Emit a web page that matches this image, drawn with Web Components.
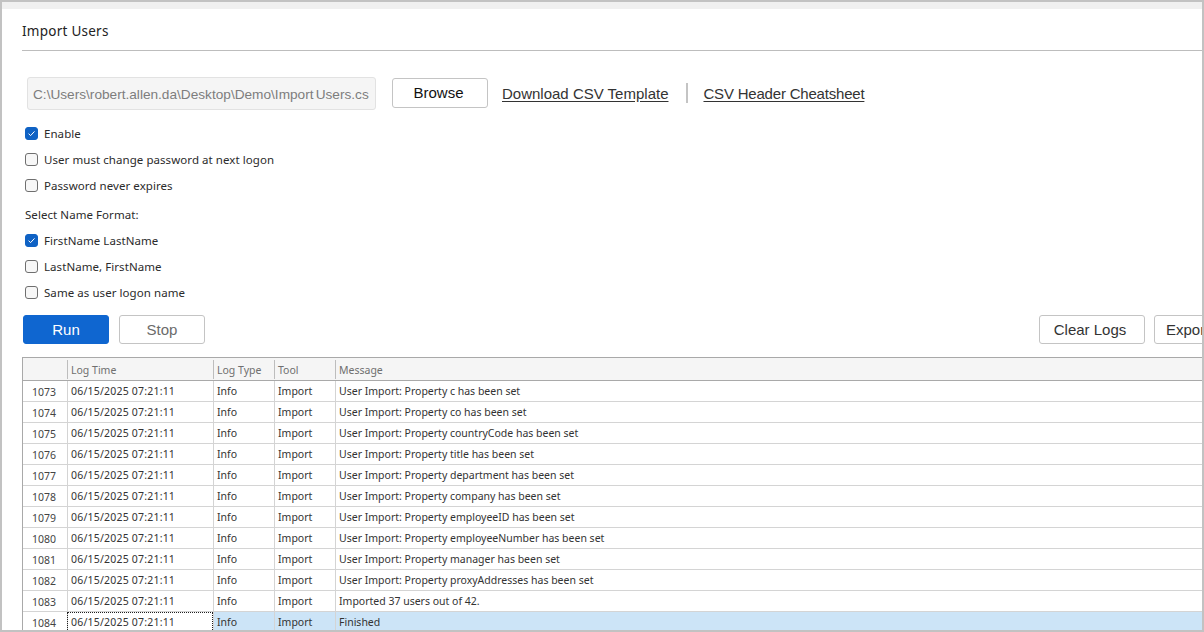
<!DOCTYPE html>
<html><head><meta charset="utf-8"><title>Import Users</title>
<style>
html,body{margin:0;height:100%;background:#fff;overflow:hidden}
body{font-family:"Noto Sans",sans-serif}
</style></head>
<body>
<import-page></import-page>
<script>
const LABEL='"Noto Sans","DejaVu Sans",sans-serif';
const UI='"Liberation Sans",Arial,sans-serif';
class XCheck extends HTMLElement{
  connectedCallback(){
    const on=this.hasAttribute('checked');
    const s=this.attachShadow({mode:'open'});
    s.innerHTML=`<style>
    :host{display:flex;align-items:center;height:26px;gap:6px;font:11.5px ${LABEL};letter-spacing:.06px;color:#2b2b2b}
    .b{width:13px;height:13px;box-sizing:border-box;border-radius:3px;display:flex;align-items:center;justify-content:center;flex:none;
       border:1px solid ${on?'#0f62c4':'#6f6f6f'};background:${on?'#0f62c4':'#f7f7f7'}}
    svg{display:${on?'block':'none'}}
    </style><span class="b"><svg width="9" height="9" viewBox="0 0 9 9"><path d="M1.6 4.7 3.6 6.6 7.5 2.4" fill="none" stroke="#fff" stroke-width="1"/></svg></span><span><slot></slot></span>`;
  }
}
customElements.define('x-check',XCheck);
class XBtn extends HTMLElement{
  connectedCallback(){
    const s=this.attachShadow({mode:'open'});
    s.innerHTML=`<style>
    :host{display:inline-flex;flex:none;align-items:center;justify-content:center;box-sizing:border-box;height:29px;width:86px;
      font:15px ${UI};color:#333;background:#fff;border:1px solid #c4c4c4;border-radius:3px}
    :host([primary]){background:#0f66d0;border-color:#0f66d0;color:#fff}
    :host([muted]){color:#6b6b6b}
    </style><slot></slot>`;
  }
}
customElements.define('x-btn',XBtn);
class XFileBar extends HTMLElement{
  connectedCallback(){
    const s=this.attachShadow({mode:'open'});
    s.innerHTML=`<style>
    :host{display:flex;align-items:center;font:15px ${UI};padding-left:5px;height:34px}
    .input{width:349px;height:33px;box-sizing:border-box;background:#f5f5f5;border:1px solid #e2e2e2;border-radius:3px;color:#7d7d7d;
      padding:0 5px;line-height:33px;white-space:nowrap;overflow:hidden;flex:none;font-size:13.65px;word-spacing:-1.6px}
    x-btn{margin-left:16px;width:96px;height:30px;color:#111;padding-right:3px;padding-bottom:2px}
    a{color:#333;text-decoration:underline;text-underline-offset:2px;margin-left:14px;white-space:nowrap}
    i{display:block;width:2px;height:20px;background:#c4c4c4;margin:0 15px 0 18px;flex:none}
    a.b{margin-left:0;letter-spacing:-.2px}
    </style><div class="input">C:\\Users\\robert.allen.da\\Desktop\\Demo\\Import Users.cs</div><x-btn>Browse</x-btn><a>Download CSV Template</a><i></i><a class="b">CSV Header Cheatsheet</a>`;
  }
}
customElements.define('x-file-bar',XFileBar);
const ROWS=[[1073,'User Import: Property c has been set'],[1074,'User Import: Property co has been set'],[1075,'User Import: Property countryCode has been set'],[1076,'User Import: Property title has been set'],[1077,'User Import: Property department has been set'],[1078,'User Import: Property company has been set'],[1079,'User Import: Property employeeID has been set'],[1080,'User Import: Property employeeNumber has been set'],[1081,'User Import: Property manager has been set'],[1082,'User Import: Property proxyAddresses has been set'],[1083,'Imported 37 users out of 42.'],[1084,'Finished']];
class XLogTable extends HTMLElement{
  connectedCallback(){
    const s=this.attachShadow({mode:'open'});
    const body=ROWS.map((r,i)=>{const last=i===ROWS.length-1;return `<div class="row${last?' sel':''}"><div class="c n">${r[0]}</div><div class="c d${last?' focus':''}">06/15/2025 07:21:11</div><div class="c">Info</div><div class="c">Import</div><div class="c m">${r[1]}</div></div>`}).join('');
    s.innerHTML=`<style>
    :host{display:block;margin-left:20px;border:1px solid #a9a9a9;border-right:0;border-bottom:0;font:10.5px ${LABEL};color:#333;height:400px;overflow:hidden}
    .row,.head{display:grid;grid-template-columns:44px 146px 61px 61px 1fr}
    .head{height:22px;background:#f5f5f5;border-bottom:1px solid #a9a9a9;color:#6f6f6f;align-items:stretch}
    .head div{display:flex;align-items:center;padding-left:3px;margin:2px 0 1px;box-sizing:border-box}
    .head div+div{border-left:1px solid #bdbdbd}
    .row{height:21px;box-sizing:border-box;border-bottom:1px solid #d4d4d4}
    .c{display:flex;align-items:center;padding-left:3px;border-left:1px solid #d4d4d4;box-sizing:border-box;white-space:nowrap;padding-bottom:1px}
    .d{letter-spacing:.2px}
    .n{border-left:0;padding-left:9px;padding-top:2px;padding-bottom:0;color:#444}
    .sel .c:not(.n):not(.focus){background:#cce4f7}
    .focus{outline:1px dotted #222;outline-offset:-1px}
    </style><div class="head"><div></div><div>Log Time</div><div>Log Type</div><div>Tool</div><div>Message</div></div>${body}`;
  }
}
customElements.define('x-log-table',XLogTable);
class ImportPage extends HTMLElement{
  connectedCallback(){
    const s=this.attachShadow({mode:'open'});
    s.innerHTML=`<style>
    :host{display:block;width:1204px;height:632px;box-sizing:border-box;border:2px solid #c2c2c2;overflow:hidden;background:#fff;color:#2b2b2b}
    .strip{height:7px;background:#f0f0f0}
    h1{margin:0 0 0 20px;height:42px;box-sizing:border-box;border-bottom:1px solid #bdbdbd;font:400 13.5px ${LABEL};letter-spacing:.25px;color:#222;line-height:44px}
    x-file-bar{margin:25px 0 0 20px}
    .opts{margin:10px 0 0 23px}
    .lbl{font:11.5px ${LABEL};letter-spacing:.06px;height:29px;display:flex;align-items:center;padding-top:4px;box-sizing:border-box;color:#2b2b2b}
    .actions{display:flex;margin:10px 0 13px 21px}
    .actions x-btn+x-btn{margin-left:10px}
    .actions .cl{margin-left:834px;width:106px;padding-right:4px}
    .actions .ex{margin-left:9px;width:106px;justify-content:flex-start;padding-left:11px}
    </style>
    <div class="strip"></div>
    <h1>Import Users</h1>
    <x-file-bar></x-file-bar>
    <div class="opts">
      <x-check checked>Enable</x-check>
      <x-check>User must change password at next logon</x-check>
      <x-check>Password never expires</x-check>
      <div class="lbl">Select Name Format:</div>
      <x-check checked>FirstName LastName</x-check>
      <x-check>LastName, FirstName</x-check>
      <x-check>Same as user logon name</x-check>
    </div>
    <div class="actions">
      <x-btn primary>Run</x-btn><x-btn muted>Stop</x-btn>
      <x-btn class="cl">Clear Logs</x-btn><x-btn class="ex">Export</x-btn>
    </div>
    <x-log-table></x-log-table>`;
  }
}
customElements.define('import-page',ImportPage);
</script>
</body></html>
